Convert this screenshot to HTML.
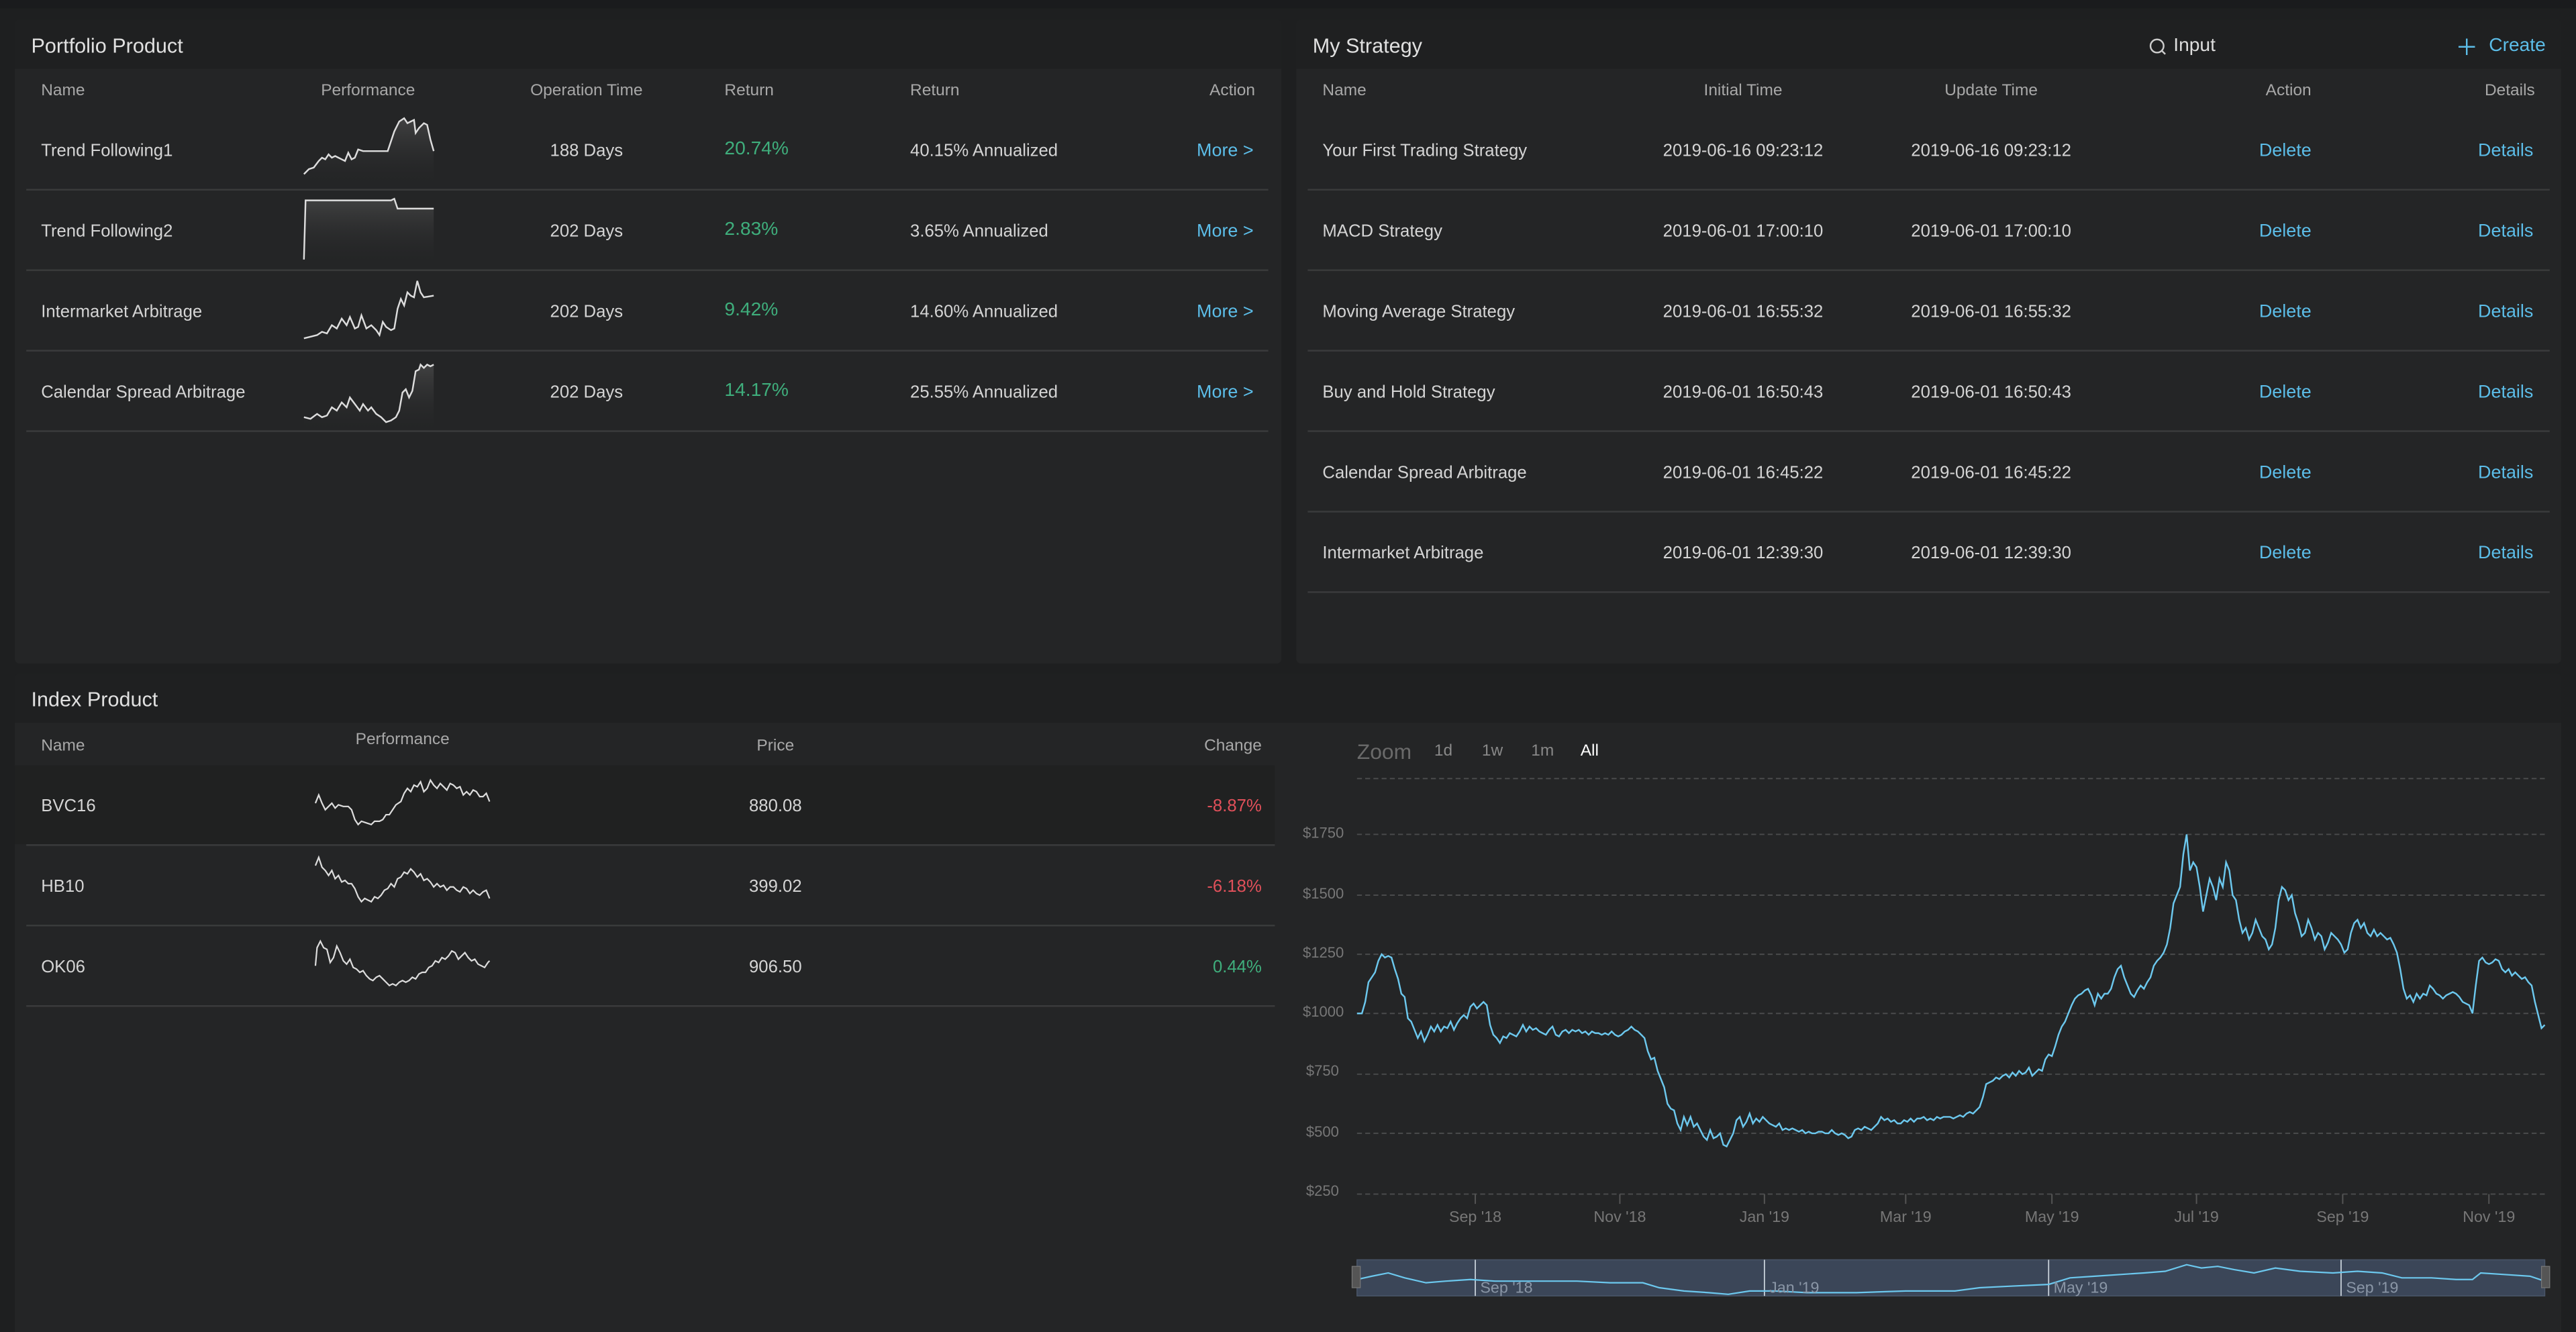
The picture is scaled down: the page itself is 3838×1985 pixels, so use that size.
<!DOCTYPE html>
<html><head><meta charset="utf-8"><style>
html,body{margin:0;padding:0;background:#1c1d1f;width:3838px;height:1984px;overflow:hidden}
#root{position:absolute;left:0;top:0;width:1568px;height:811px;transform:scale(2.4477);transform-origin:0 0;background:#1e1f20;font-family:"Liberation Sans",sans-serif;color:#d4d4d4;font-size:10.5px}
.a{position:absolute;white-space:nowrap}
div.a{margin-top:1px}
.panel{position:absolute;background:#242526;border-radius:3px}
.ph{position:absolute;left:0;right:0;top:0;height:30px;background:#1f2021;border-radius:3px 3px 0 0}
.title{position:absolute;left:10px;top:9px;font-size:12.5px;color:#e0e0e0}
.th{color:#a8a8a8;font-size:10px}
.sep{position:absolute;height:1px;background:#3a3b3c}
.g{color:#3fae7c;font-size:11.5px}
.r{color:#e0505a}
.b{color:#5cbde8;font-size:11px}
.c{transform:translateX(-50%)}
.rt{transform:translateX(-100%)}
</style></head><body><div id="root">
<div class="a" style="left:0;top:-1px;width:1568px;height:5px;background:#1a1b1d"></div>

<!-- Portfolio -->
<div class="panel" style="left:9px;top:12px;width:771px;height:392px">
 <div class="ph"></div><div class="title">Portfolio Product</div>
</div>
<div class="a th" style="left:25px;top:49px">Name</div>
<div class="a th c" style="left:224px;top:49px">Performance</div>
<div class="a th c" style="left:357px;top:49px">Operation Time</div>
<div class="a th" style="left:441px;top:49px">Return</div>
<div class="a th" style="left:554px;top:49px">Return</div>
<div class="a th rt" style="left:764px;top:49px">Action</div>

<div class="a" style="left:25px;top:85px">Trend Following1</div>
<div class="a c" style="left:357px;top:85px">188 Days</div>
<div class="a g" style="left:441px;top:84px">20.74%</div>
<div class="a" style="left:554px;top:85px">40.15% Annualized</div>
<div class="a b rt" style="left:763px;top:85px">More &gt;</div>
<div class="sep" style="left:16px;width:756px;top:115px"></div>

<div class="a" style="left:25px;top:134px">Trend Following2</div>
<div class="a c" style="left:357px;top:134px">202 Days</div>
<div class="a g" style="left:441px;top:133px">2.83%</div>
<div class="a" style="left:554px;top:134px">3.65% Annualized</div>
<div class="a b rt" style="left:763px;top:134px">More &gt;</div>
<div class="sep" style="left:16px;width:756px;top:164px"></div>

<div class="a" style="left:25px;top:183px">Intermarket Arbitrage</div>
<div class="a c" style="left:357px;top:183px">202 Days</div>
<div class="a g" style="left:441px;top:182px">9.42%</div>
<div class="a" style="left:554px;top:183px">14.60% Annualized</div>
<div class="a b rt" style="left:763px;top:183px">More &gt;</div>
<div class="sep" style="left:16px;width:756px;top:213px"></div>

<div class="a" style="left:25px;top:232px">Calendar Spread Arbitrage</div>
<div class="a c" style="left:357px;top:232px">202 Days</div>
<div class="a g" style="left:441px;top:231px">14.17%</div>
<div class="a" style="left:554px;top:232px">25.55% Annualized</div>
<div class="a b rt" style="left:763px;top:232px">More &gt;</div>
<div class="sep" style="left:16px;width:756px;top:262px"></div>

<svg class="a" style="left:0;top:0" width="800" height="420" viewBox="0 0 800 420">
<defs><linearGradient id="sg" x1="0" y1="0" x2="0" y2="1"><stop offset="0" stop-color="#555" stop-opacity=".6"/><stop offset="1" stop-color="#2a2b2c" stop-opacity="0"/></linearGradient></defs>
<g fill="none" stroke="#ddd" stroke-width="1">
<path fill="url(#sg)" stroke="none" d="M185,106 L188,103 L191,102 L194,98 L196,96 L198,97 L200,94 L202,96 L204,95 L206,96 L208,97 L210,98 L212,93 L214,97 L216,96 L218,91 L221,92 L233,92 L236,92 L240,80 L243,74 L246,72 L248,75 L250,74 L252,73 L253,81 L255,78 L258,75 L260,76 L262,85 L264,92 L264,112 L185,112Z"/>
<path d="M185,106 L188,103 L191,102 L194,98 L196,96 L198,97 L200,94 L202,96 L204,95 L206,96 L208,97 L210,98 L212,93 L214,97 L216,96 L218,91 L221,92 L233,92 L236,92 L240,80 L243,74 L246,72 L248,75 L250,74 L252,73 L253,81 L255,78 L258,75 L260,76 L262,85 L264,92"/>
<path fill="url(#sg)" stroke="none" d="M185,158 L186,122 L238,122 L240,121 L242,127 L264,127 L264,160 L185,160Z"/>
<path d="M185,158 L186,122 L238,122 L240,121 L242,127 L264,127"/>
<path d="M185,206 L189,205 L193,204 L196,202 L199,203 L202,198 L205,200 L208,194 L211,198 L213,193 L216,200 L218,199 L220,192 L223,200 L226,198 L229,201 L231,204 L233,196 L235,199 L238,201 L240,200 L242,188 L244,182 L246,186 L248,178 L250,180 L252,181 L254,171 L256,178 L258,181 L264,180"/>
<path fill="url(#sg)" stroke="none" d="M185,254 L189,255 L193,252 L196,254 L199,253 L202,248 L205,250 L208,245 L211,248 L213,242 L216,246 L219,250 L221,246 L224,250 L226,248 L229,252 L232,254 L235,257 L238,256 L241,254 L243,250 L245,239 L247,237 L249,242 L251,238 L253,226 L255,225 L256,222 L258,224 L260,222 L262,223 L264,222 L264,262 L185,262Z"/>
<path d="M185,254 L189,255 L193,252 L196,254 L199,253 L202,248 L205,250 L208,245 L211,248 L213,242 L216,246 L219,250 L221,246 L224,250 L226,248 L229,252 L232,254 L235,257 L238,256 L241,254 L243,250 L245,239 L247,237 L249,242 L251,238 L253,226 L255,225 L256,222 L258,224 L260,222 L262,223 L264,222"/>
</g></svg>

<!-- Strategy -->
<div class="panel" style="left:789px;top:12px;width:770px;height:392px">
 <div class="ph"></div><div class="title">My Strategy</div>
</div>
<svg class="a" style="left:1308px;top:23px" width="11" height="11" viewBox="0 0 11 11"><circle cx="5" cy="5" r="4" fill="none" stroke="#ccc" stroke-width="1"/><path d="M8 8 L10 10" stroke="#ccc" stroke-width="1"/></svg>
<div class="a" style="left:1323px;top:21px;font-size:11.5px;color:#ddd">Input</div>
<svg class="a" style="left:1496px;top:23px" width="11" height="11" viewBox="0 0 11 11"><path d="M5.5 0.5V10.5M0.5 5.5H10.5" stroke="#5cbde8" stroke-width="1"/></svg>
<div class="a" style="left:1515px;top:21px;font-size:11.5px;color:#5cbde8">Create</div>
<div class="a th" style="left:805px;top:49px">Name</div>
<div class="a th c" style="left:1061px;top:49px">Initial Time</div>
<div class="a th c" style="left:1212px;top:49px">Update Time</div>
<div class="a th c" style="left:1393px;top:49px">Action</div>
<div class="a th rt" style="left:1543px;top:49px">Details</div>

<div class="a" style="left:805px;top:85px">Your First Trading Strategy</div>
<div class="a c" style="left:1061px;top:85px">2019-06-16 09:23:12</div>
<div class="a c" style="left:1212px;top:85px">2019-06-16 09:23:12</div>
<div class="a b c" style="left:1391px;top:85px">Delete</div>
<div class="a b rt" style="left:1542px;top:85px">Details</div>
<div class="sep" style="left:796px;width:756px;top:115px"></div>
<div class="a" style="left:805px;top:134px">MACD Strategy</div>
<div class="a c" style="left:1061px;top:134px">2019-06-01 17:00:10</div>
<div class="a c" style="left:1212px;top:134px">2019-06-01 17:00:10</div>
<div class="a b c" style="left:1391px;top:134px">Delete</div>
<div class="a b rt" style="left:1542px;top:134px">Details</div>
<div class="sep" style="left:796px;width:756px;top:164px"></div>
<div class="a" style="left:805px;top:183px">Moving Average Strategy</div>
<div class="a c" style="left:1061px;top:183px">2019-06-01 16:55:32</div>
<div class="a c" style="left:1212px;top:183px">2019-06-01 16:55:32</div>
<div class="a b c" style="left:1391px;top:183px">Delete</div>
<div class="a b rt" style="left:1542px;top:183px">Details</div>
<div class="sep" style="left:796px;width:756px;top:213px"></div>
<div class="a" style="left:805px;top:232px">Buy and Hold Strategy</div>
<div class="a c" style="left:1061px;top:232px">2019-06-01 16:50:43</div>
<div class="a c" style="left:1212px;top:232px">2019-06-01 16:50:43</div>
<div class="a b c" style="left:1391px;top:232px">Delete</div>
<div class="a b rt" style="left:1542px;top:232px">Details</div>
<div class="sep" style="left:796px;width:756px;top:262px"></div>
<div class="a" style="left:805px;top:281px">Calendar Spread Arbitrage</div>
<div class="a c" style="left:1061px;top:281px">2019-06-01 16:45:22</div>
<div class="a c" style="left:1212px;top:281px">2019-06-01 16:45:22</div>
<div class="a b c" style="left:1391px;top:281px">Delete</div>
<div class="a b rt" style="left:1542px;top:281px">Details</div>
<div class="sep" style="left:796px;width:756px;top:311px"></div>
<div class="a" style="left:805px;top:330px">Intermarket Arbitrage</div>
<div class="a c" style="left:1061px;top:330px">2019-06-01 12:39:30</div>
<div class="a c" style="left:1212px;top:330px">2019-06-01 12:39:30</div>
<div class="a b c" style="left:1391px;top:330px">Delete</div>
<div class="a b rt" style="left:1542px;top:330px">Details</div>
<div class="sep" style="left:796px;width:756px;top:360px"></div>

<!-- Index -->
<div class="panel" style="left:9px;top:410px;width:1550px;height:401px;border-radius:3px 3px 0 0">
 <div class="ph"></div><div class="title">Index Product</div>
</div>
<div class="a" style="left:9px;top:465px;width:767px;height:48px;background:#202121"></div>
<div class="a th" style="left:25px;top:448px">Name</div>
<div class="a th c" style="left:245px;top:444px">Performance</div>
<div class="a th c" style="left:472px;top:448px">Price</div>
<div class="a th rt" style="left:768px;top:448px">Change</div>

<div class="a" style="left:25px;top:484px">BVC16</div>
<div class="a c" style="left:472px;top:484px">880.08</div>
<div class="a r rt" style="left:768px;top:484px">-8.87%</div>
<div class="sep" style="left:16px;width:760px;top:514px"></div>
<div class="a" style="left:25px;top:533px">HB10</div>
<div class="a c" style="left:472px;top:533px">399.02</div>
<div class="a r rt" style="left:768px;top:533px">-6.18%</div>
<div class="sep" style="left:16px;width:760px;top:563px"></div>
<div class="a" style="left:25px;top:582px">OK06</div>
<div class="a c" style="left:472px;top:582px">906.50</div>
<div class="a rt" style="left:768px;top:582px;color:#3fae7c">0.44%</div>
<div class="sep" style="left:16px;width:760px;top:612px"></div>

<svg class="a" style="left:0;top:0" width="320" height="620" viewBox="0 0 320 620">
<g fill="none" stroke="#ddd" stroke-width="0.9">
<path d="M192,489 L194,484 L196,489 L198,493 L200,491 L202,489 L204,492 L206,490 L209,491 L212,491 L214,493 L216,499 L218,502 L220,500 L223,501 L226,502 L228,500 L231,500 L233,499 L235,496 L237,496 L239,493 L241,490 L244,488 L246,483 L248,480 L250,482 L252,478 L254,479 L256,476 L258,482 L260,480 L262,475 L264,478 L266,480 L268,477 L270,479 L272,481 L274,477 L276,478 L278,480 L280,479 L282,484 L284,482 L286,484 L288,481 L290,482 L292,485 L294,485 L296,483 L298,488"/>
<path d="M192,527 L194,522 L196,528 L198,530 L200,533 L202,530 L204,535 L206,533 L208,537 L210,536 L212,538 L214,538 L216,541 L218,546 L220,549 L222,547 L224,548 L226,549 L228,546 L230,547 L232,545 L234,542 L236,541 L238,538 L240,540 L242,535 L244,534 L246,531 L248,532 L250,529 L252,531 L254,534 L256,532 L258,536 L260,535 L262,537 L264,540 L266,538 L268,540 L270,539 L272,542 L274,540 L276,540 L278,542 L280,543 L282,540 L284,541 L286,544 L288,542 L290,544 L292,545 L294,543 L296,542 L298,547"/>
<path d="M192,588 L193,577 L195,573 L197,577 L199,578 L201,586 L203,583 L205,576 L207,580 L209,585 L211,587 L213,584 L215,589 L217,590 L219,592 L221,591 L223,594 L225,596 L227,597 L229,595 L231,594 L233,596 L235,598 L237,600 L239,599 L241,600 L243,598 L245,597 L247,598 L249,597 L251,595 L253,596 L255,593 L257,592 L259,592 L261,589 L263,588 L265,585 L267,586 L269,583 L271,584 L273,582 L275,579 L277,580 L279,584 L281,582 L283,580 L285,583 L287,585 L289,584 L291,587 L293,588 L295,589 L297,586 L298,585"/>
</g></svg>

<!-- Chart -->
<div class="a" style="left:826px;top:449px;font-size:13px;color:#6a6a6a">Zoom</div>
<div class="a" style="left:873px;top:451px;font-size:10px;color:#888">1d</div>
<div class="a" style="left:902px;top:451px;font-size:10px;color:#888">1w</div>
<div class="a" style="left:932px;top:451px;font-size:10px;color:#888">1m</div>
<div class="a" style="left:962px;top:451px;font-size:10px;color:#fff">All</div>
<svg class="a" style="left:780px;top:460px" width="788" height="340" viewBox="780 460 788 340">
<g stroke="#4a4b4c" stroke-dasharray="3,2" stroke-width="0.8">
<path d="M826,474H1549M826,508H1549M826,545H1549M826,581H1549M826,617H1549M826,654H1549M826,690H1549M826,727H1549"/>
</g>
<g fill="#777" font-size="9" font-family="Liberation Sans,sans-serif">
<text x="793" y="510">$1750</text><text x="793" y="547">$1500</text><text x="793" y="583">$1250</text><text x="793" y="619">$1000</text>
<text x="795" y="655">$750</text><text x="795" y="692">$500</text><text x="795" y="728">$250</text>
<g text-anchor="middle" font-size="9.5"><text x="898" y="744">Sep '18</text><text x="986" y="744">Nov '18</text><text x="1074" y="744">Jan '19</text><text x="1160" y="744">Mar '19</text><text x="1249" y="744">May '19</text><text x="1337" y="744">Jul '19</text><text x="1426" y="744">Sep '19</text><text x="1515" y="744">Nov '19</text></g>
</g>
<g stroke="#555" stroke-width="0.8"><path d="M898,727v6M986,727v6M1074,727v6M1160,727v6M1249,727v6M1337,727v6M1426,727v6M1515,727v6"/></g>
<path fill="none" stroke="#6cc8ee" stroke-width="1" d="M826,617 L829,617 L831,610 L833,598 L835,595 L837,592 L839,585 L841,581 L843,583 L845,582 L847,583 L849,590 L851,596 L853,605 L855,607 L857,620 L859,622 L861,627 L863,632 L865,628 L867,634 L869,630 L871,625 L873,628 L875,624 L877,628 L879,625 L881,626 L883,622 L885,627 L887,623 L889,620 L891,618 L893,620 L895,613 L897,611 L899,614 L901,612 L903,610 L905,612 L907,624 L909,630 L911,632 L913,635 L915,631 L917,632 L919,629 L921,630 L923,631 L925,628 L927,624 L929,628 L931,625 L933,627 L935,626 L937,628 L939,629 L941,630 L943,627 L945,625 L947,630 L949,631 L951,628 L953,627 L955,629 L957,627 L959,628 L961,627 L963,629 L965,628 L967,630 L969,628 L971,629 L973,629 L975,630 L977,629 L979,630 L981,628 L983,630 L985,631 L987,630 L989,628 L991,627 L993,625 L995,627 L997,628 L999,630 L1001,632 L1003,640 L1005,645 L1007,644 L1009,652 L1011,657 L1013,662 L1015,672 L1017,675 L1019,676 L1021,684 L1023,688 L1025,680 L1027,685 L1029,680 L1031,686 L1033,684 L1035,688 L1037,692 L1039,694 L1041,688 L1043,693 L1045,692 L1047,690 L1049,697 L1051,698 L1053,694 L1055,690 L1057,682 L1059,680 L1061,686 L1063,683 L1065,678 L1067,684 L1069,681 L1071,683 L1073,680 L1075,682 L1077,684 L1079,685 L1081,686 L1083,684 L1085,688 L1087,687 L1089,688 L1091,687 L1093,688 L1095,689 L1097,688 L1099,690 L1101,689 L1103,690 L1105,690 L1107,689 L1109,689 L1111,690 L1113,690 L1115,688 L1117,690 L1119,691 L1121,690 L1123,691 L1125,693 L1127,692 L1129,688 L1131,687 L1133,688 L1135,686 L1137,687 L1139,688 L1141,686 L1143,684 L1145,680 L1147,682 L1149,681 L1151,683 L1153,682 L1155,684 L1157,684 L1159,682 L1161,683 L1163,681 L1165,683 L1167,681 L1169,681 L1171,680 L1173,682 L1175,681 L1177,682 L1179,680 L1181,681 L1183,680 L1185,680 L1187,680 L1189,681 L1191,680 L1193,679 L1195,680 L1197,678 L1199,677 L1201,678 L1203,676 L1205,674 L1207,668 L1209,660 L1211,659 L1213,658 L1215,656 L1217,657 L1219,655 L1221,654 L1223,656 L1225,653 L1227,655 L1229,652 L1231,654 L1233,653 L1235,650 L1237,655 L1239,653 L1241,651 L1243,652 L1245,645 L1247,642 L1249,643 L1251,637 L1253,630 L1255,625 L1257,622 L1259,617 L1261,612 L1263,608 L1265,606 L1267,605 L1269,603 L1271,602 L1273,606 L1275,612 L1277,605 L1279,608 L1281,605 L1283,605 L1285,602 L1287,595 L1289,590 L1291,588 L1293,595 L1295,600 L1297,605 L1299,607 L1301,603 L1303,600 L1305,602 L1307,598 L1309,595 L1311,588 L1313,585 L1315,583 L1317,580 L1319,575 L1321,565 L1323,550 L1325,545 L1327,540 L1329,520 L1331,508 L1333,530 L1335,525 L1337,528 L1339,540 L1341,555 L1343,545 L1345,535 L1347,540 L1349,548 L1351,535 L1353,540 L1355,525 L1357,530 L1359,545 L1361,548 L1363,560 L1365,568 L1367,565 L1369,572 L1371,568 L1373,560 L1375,565 L1377,570 L1379,572 L1381,578 L1383,575 L1385,565 L1387,548 L1389,540 L1391,542 L1393,548 L1395,545 L1397,556 L1399,562 L1401,570 L1403,568 L1405,560 L1407,565 L1409,572 L1411,568 L1413,570 L1415,578 L1417,574 L1419,568 L1421,570 L1423,572 L1425,575 L1427,580 L1429,578 L1431,568 L1433,562 L1435,560 L1437,565 L1439,562 L1441,568 L1443,570 L1445,566 L1447,570 L1449,568 L1451,570 L1453,572 L1455,571 L1457,575 L1459,580 L1461,590 L1463,602 L1465,608 L1467,606 L1469,610 L1471,605 L1473,608 L1475,605 L1477,606 L1479,600 L1481,602 L1483,605 L1485,606 L1487,608 L1489,606 L1491,605 L1493,604 L1495,605 L1497,607 L1499,610 L1501,611 L1503,612 L1505,617 L1507,600 L1509,585 L1511,583 L1513,586 L1515,587 L1517,586 L1519,584 L1521,585 L1523,590 L1525,592 L1527,590 L1529,594 L1531,592 L1533,594 L1535,596 L1537,595 L1539,598 L1541,600 L1543,610 L1545,618 L1547,626 L1549,624"/>
<rect x="826" y="767" width="723" height="22" fill="#3b4658" stroke="#4a5568" stroke-width="0.6"/>
<g stroke="#cfd8e0" stroke-width="0.7"><path d="M898,767V789M1074,767V789M1247,767V789M1425,767V789"/></g>
<path fill="none" stroke="#6cc8ee" stroke-width="0.9" d="M826,779 L835,777 L845,775 L855,778 L868,781 L880,780 L895,779 L910,780 L930,780 L960,780 L980,781 L1000,781 L1010,784 L1025,786 L1040,787 L1052,788 L1065,786 L1080,786 L1100,787 L1130,787 L1160,786 L1190,786 L1205,784 L1225,783 L1247,782 L1260,778 L1275,777 L1290,776 L1305,775 L1318,774 L1331,770 L1340,772 L1350,771 L1360,773 L1372,775 L1385,772 L1400,774 L1420,775 L1435,774 L1450,775 L1462,778 L1480,778 L1495,779 L1505,779 L1510,775 L1525,776 L1540,777 L1549,780"/>
<rect x="823" y="771" width="5" height="13" fill="#555" stroke="#777" stroke-width="0.5"/>
<rect x="1547" y="771" width="5" height="13" fill="#555" stroke="#777" stroke-width="0.5"/>
<g fill="#8a96a6" font-size="9.5" font-family="Liberation Sans,sans-serif"><text x="901" y="787">Sep '18</text><text x="1077" y="787">Jan '19</text><text x="1250" y="787">May '19</text><text x="1428" y="787">Sep '19</text></g>
</svg>
</div></body></html>
